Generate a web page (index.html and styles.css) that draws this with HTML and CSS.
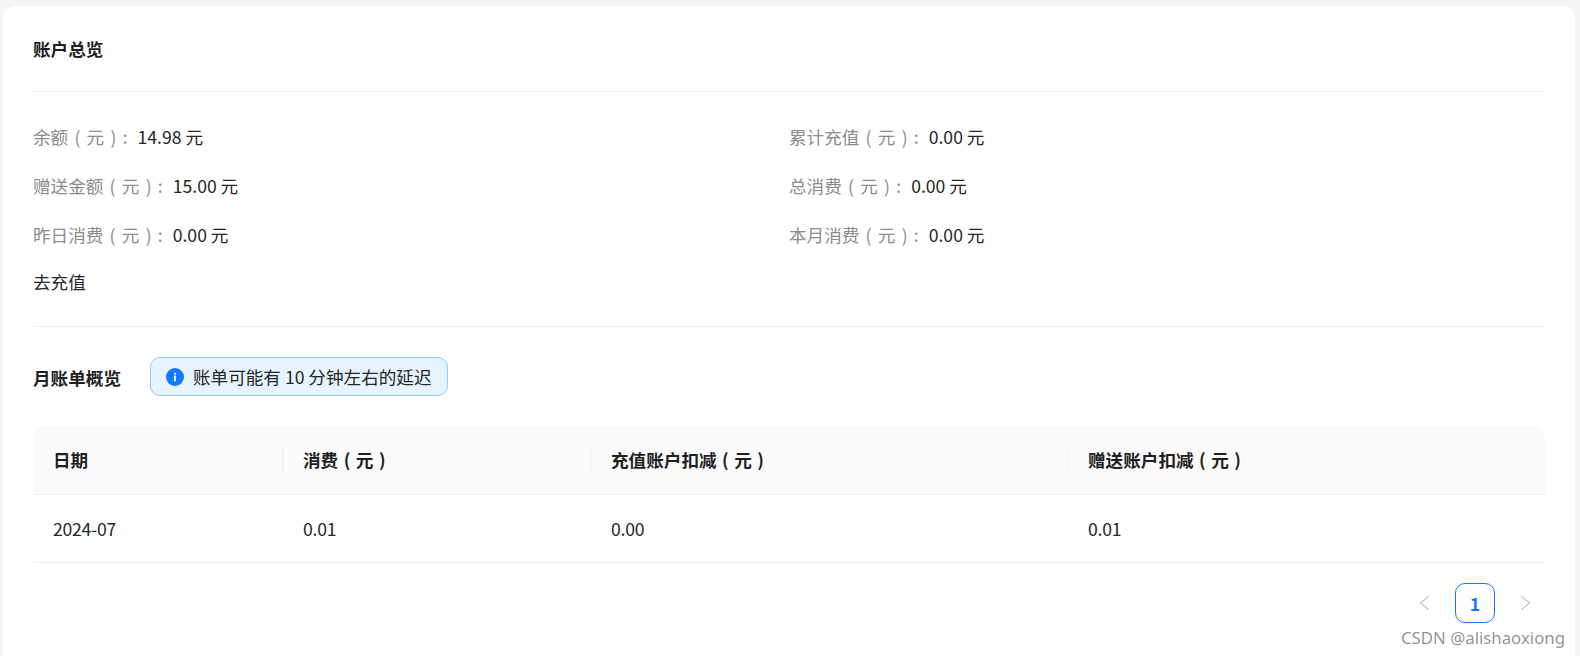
FILE: index.html
```html
<!DOCTYPE html>
<html lang="zh-CN">
<head>
<meta charset="utf-8">
<title>账户总览</title>
<link rel="stylesheet" href="styles.css">
</head>
<body>
<main class="card">
  <h2 class="title overview-title">账户总览</h2>
  <section class="overview">
    <div class="stats">
      <div class="stat"><span class="label">余额 ( 元 ) :</span><span class="value">14.98 元</span></div>
      <div class="stat"><span class="label">累计充值 ( 元 ) :</span><span class="value">0.00 元</span></div>
      <div class="stat"><span class="label">赠送金额 ( 元 ) :</span><span class="value">15.00 元</span></div>
      <div class="stat"><span class="label">总消费 ( 元 ) :</span><span class="value">0.00 元</span></div>
      <div class="stat"><span class="label">昨日消费 ( 元 ) :</span><span class="value">0.00 元</span></div>
      <div class="stat"><span class="label">本月消费 ( 元 ) :</span><span class="value">0.00 元</span></div>
    </div>
    <a class="recharge">去充值</a>
  </section>
  <section class="monthly">
    <div class="monthly-head">
      <h2 class="title monthly-title">月账单概览</h2>
      <div class="notice">
        <svg class="notice-icon" viewBox="0 0 18 18" width="18" height="18" aria-hidden="true">
          <circle cx="9" cy="9" r="9" fill="#1677ff"/>
          <rect x="8.1" y="7.6" width="1.8" height="5.6" fill="#fff"/>
          <rect x="8.1" y="4.8" width="1.8" height="1.8" fill="#fff"/>
        </svg>
        <span>账单可能有 10 分钟左右的延迟</span>
      </div>
    </div>
    <table class="bill">
      <colgroup>
        <col class="col-date"><col class="col-cost"><col class="col-charge"><col class="col-gift">
      </colgroup>
      <thead>
        <tr><th>日期</th><th>消费 ( 元 )</th><th>充值账户扣减 ( 元 )</th><th>赠送账户扣减 ( 元 )</th></tr>
      </thead>
      <tbody>
        <tr><td>2024-07</td><td>0.01</td><td>0.00</td><td>0.01</td></tr>
      </tbody>
    </table>
    <nav class="pager">
      <button class="page-arrow" aria-label="上一页">
        <svg viewBox="0 0 14 14" width="14" height="14"><path d="M10.500 .5 2.500 7l8 6.500" fill="none" stroke="#bfbfbf" stroke-width="1.100"/></svg>
      </button>
      <button class="page-num">1</button>
      <button class="page-arrow" aria-label="下一页">
        <svg viewBox="0 0 14 14" width="14" height="14"><path d="M3.500 .5l8 6.500-8 6.500" fill="none" stroke="#bfbfbf" stroke-width="1.100"/></svg>
      </button>
    </nav>
  </section>
</main>
<div class="watermark">CSDN @alishaoxiong</div>
</body>
</html>
```
FILE: styles.css
```css
* { box-sizing: border-box; }
html, body { height: 100%; }
body {
  margin: 0;
  padding: 6px 5px 0 3px;
  background: #f5f5f5;
  overflow: hidden;
  font-family: "Noto Sans CJK SC", "Noto Sans", sans-serif;
  font-size: 17.6px;
  line-height: 24px;
  color: rgba(0, 0, 0, 0.88);
  position: relative;
}
.card {
  height: 650px;
  background: #fff;
  border-radius: 12px 12px 0 0;
  padding: 0 30px;
}
.title {
  margin: 0;
  font-size: 17.6px;
  line-height: 24px;
  font-weight: 700;
  color: #1f1f1f;
}
.overview-title {
  padding: 31px 0 23px;
  border-bottom: 1px solid #f0f0f0;
  height: 86px;
}
.overview {
  padding-top: 33px;
  height: 235px;
  border-bottom: 1px solid #f0f0f0;
}
.stats {
  display: grid;
  grid-template-columns: 1fr 1fr;
  row-gap: 25px;
}
.stat { display: flex; gap: 10px; }
.label { color: #8c8c8c; word-spacing: 2.3px; }
.value { color: #262626; }
.recharge {
  display: block;
  margin-top: 23px;
  color: #262626;
}
.monthly { padding-top: 30px; }
.monthly-head {
  display: flex;
  align-items: center;
  gap: 29px;
  height: 39px;
}
.monthly-title { margin-top: 2px; }
.notice {
  display: flex;
  align-items: center;
  gap: 9px;
  height: 39px;
  padding: 0 15px;
  background: #e6f4ff;
  border: 1px solid #91caff;
  border-radius: 10px;
  color: #262626;
}
.notice-icon { flex: none; }
.bill {
  width: 100%;
  margin-top: 30px;
  border-collapse: separate;
  border-spacing: 0;
  table-layout: fixed;
}
.col-date { width: 250px; }
.col-cost { width: 308px; }
.col-charge { width: 477px; }
.bill th, .bill td {
  text-align: left;
  padding: 0 20px;
  height: 68px;
  border-bottom: 1px solid #f0f0f0;
}
.bill th {
  position: relative;
  height: 69px;
  background: #fafafa;
  font-weight: 700;
  color: #1f1f1f;
  word-spacing: 1.5px;
}
.bill td { color: #262626; letter-spacing: -0.25px; }
.bill th:first-child { border-top-left-radius: 12px; }
.bill th:last-child { border-top-right-radius: 12px; }
.bill th + th::before {
  content: "";
  position: absolute;
  left: -1px;
  top: 20px;
  height: 28px;
  width: 1px;
  background: #f0f0f0;
}
.pager {
  display: flex;
  justify-content: flex-end;
  align-items: center;
  gap: 10px;
  margin-top: 20px;
}
.page-arrow, .page-num {
  width: 40px;
  height: 40px;
  padding: 0;
  background: none;
  font-family: inherit;
  font-size: 17.6px;
}
.page-arrow {
  display: flex;
  align-items: center;
  justify-content: center;
  border: 0;
}
.page-num {
  border: 1px solid #1677ff;
  border-radius: 10px;
  color: #1677ff;
  font-weight: 600;
}
.watermark {
  position: absolute;
  right: 15px;
  bottom: 8px;
  font-family: "Noto Sans", sans-serif;
  font-size: 16.8px;
  line-height: 20px;
  color: rgba(0, 0, 0, 0.45);
}
```
